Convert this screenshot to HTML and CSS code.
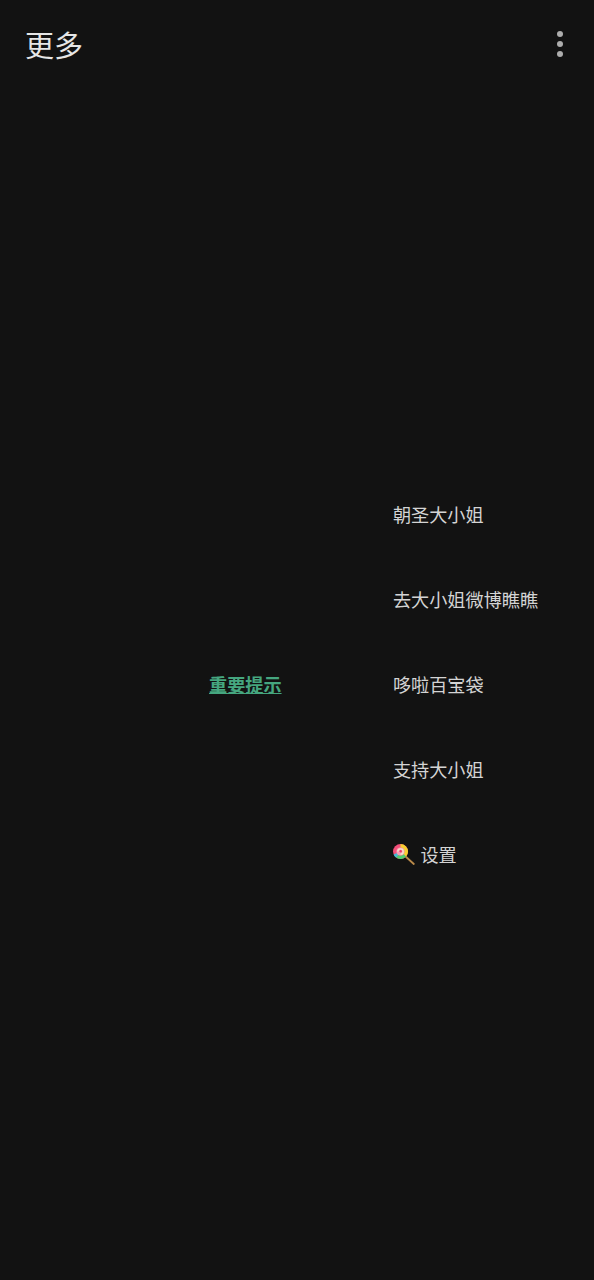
FILE: index.html
```html
<!DOCTYPE html>
<html lang="zh-CN">
<head>
<meta charset="utf-8">
<title>更多</title>
<link rel="stylesheet" href="styles.css">
</head>
<body>
<div class="page">
  <header class="topbar">
    <h1 class="title">更多</h1>
    <button class="more" aria-label="更多选项"><span class="dot"></span><span class="dot"></span><span class="dot"></span></button>
  </header>
  <main class="content">
    <a class="notice" href="#">重要提示</a>
    <ul class="menu">
      <li class="item">朝圣大小姐</li>
      <li class="item">去大小姐微博瞧瞧</li>
      <li class="item">哆啦百宝袋</li>
      <li class="item">支持大小姐</li>
      <li class="item item-icon">
        <svg class="lolly" viewBox="0 0 22 22" aria-hidden="true">
          <path d="M11.500 12.500L20.800 21" stroke="#b98a4a" stroke-width="1.800" stroke-linecap="round"/>
          <circle cx="7.500" cy="8.500" r="7.500" fill="#f4507a"/>
          <path d="M7.500 1a7.500 7.500 0 0 1 7.500 7.500c0 2-.8 3.700-2 5l-2.500-2.500a4 4 0 0 0-3-6.500z" fill="#f6d02f"/>
          <path d="M13 13.500A7.500 7.500 0 0 1 3 14.500l2.500-2.500a4 4 0 0 0 5-1z" fill="#4fcf6e"/>
          <path d="M3 14.500A7.500 7.500 0 0 1 .6 11.500l3.400-1.500a4 4 0 0 0 1.500 2z" fill="#3fbfd4"/>
          <circle cx="7.500" cy="8.500" r="4" fill="#f6a0b8"/>
          <path d="M4.800 8.500a2.700 2.700 0 1 1 2.700 2.700" fill="none" stroke="#f4e6c8" stroke-width="1.300"/>
          <circle cx="7.700" cy="8.300" r="1.200" fill="#ec3a68"/>
        </svg>
        <span>设置</span>
      </li>
    </ul>
  </main>
</div>
</body>
</html>
```
FILE: styles.css
```css
* { box-sizing: border-box; }
html, body { margin: 0; padding: 0; height: 100%; }
body {
  background: #121212;
  color: #e3e3e3;
  font-family: "Noto Sans CJK SC", "Noto Sans", sans-serif;
}
.page { display: flex; flex-direction: column; height: 1280px; overflow: hidden; }
.topbar {
  display: flex;
  align-items: center;
  justify-content: space-between;
  height: 88px;
  padding: 0 31px 0 25px;
  flex: none;
}
.title { margin: 0; font-size: 29px; font-weight: 400; line-height: 1; color: #e6e6e6; }
.more {
  display: flex;
  flex-direction: column;
  gap: 3.700px;
  padding: 0;
  border: 0;
  background: none;
}
.dot { width: 6px; height: 6px; border-radius: 50%; background: #adadad; }
.content {
  flex: 1;
  display: flex;
  align-items: center;
  padding-left: 209px;
  gap: 111.400px;
}
.notice {
  font-size: 18.150px;
  font-weight: 700;
  line-height: 26px;
  color: #45a67f;
  text-decoration: underline;
}
.menu { list-style: none; margin: 0; padding: 0; display: flex; flex-direction: column; }
.item {
  height: 85px;
  display: flex;
  align-items: center;
  font-size: 18.150px;
  color: #d4d4d4;
  white-space: nowrap;
}
.item-icon { gap: 5.500px; }
.lolly { width: 22px; height: 22px; flex: none; }
```
